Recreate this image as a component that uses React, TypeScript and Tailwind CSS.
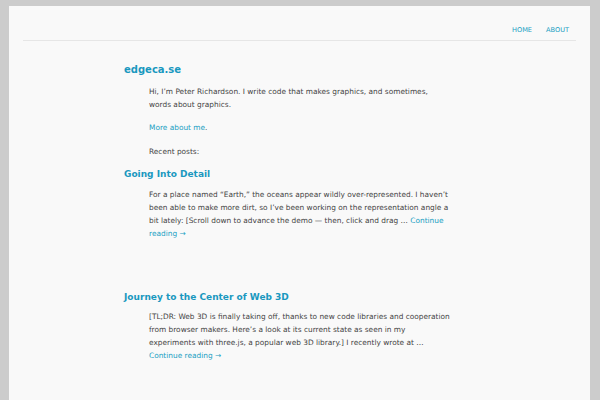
import React from "react";

export default function App() {
  const font = { fontFamily: '"DejaVu Sans", Verdana, sans-serif' };
  return (
    <div className="min-h-[400px] bg-[#cccccc] pl-[9px] pr-[10px] pt-[6px]" style={font}>
      <div className="min-h-[394px] bg-[#f9f9f9] px-[14px]">
        <div className="flex justify-end gap-[14px] border-b border-[#e6e6e6] pr-[7px] pt-[19px] pb-[5px] text-[6.6px] leading-[10px] text-[#21a0c3]">
          <a>HOME</a>
          <a>ABOUT</a>
        </div>
        <div className="ml-[101px] w-[340px] pt-[21px] text-[7.4px] leading-[13px] text-[#444]">
          <h1 className="text-[10px] font-bold leading-[16px] text-[#1a98bf]">edgeca.se</h1>
          <div className="pl-[25px] pt-[7px]">
            <p className="whitespace-nowrap">Hi, I’m Peter Richardson. I write code that makes graphics, and sometimes,<br />words about graphics.</p>
            <p className="mt-[10px]"><a className="text-[#21a0c3]">More about me</a>.</p>
            <p className="mt-[11px]">Recent posts:</p>
          </div>
          <h2 className="mt-[8px] text-[9px] font-bold leading-[16px] text-[#1a98bf]">Going Into Detail</h2>
          <p className="mt-[6px] whitespace-nowrap pl-[25px]">
            For a place named “Earth,” the oceans appear wildly over-represented. I haven’t<br />
            been able to make more dirt, so I’ve been working on the representation angle a<br />
            bit lately: [Scroll down to advance the demo — then, click and drag … <a className="text-[#21a0c3]">Continue<br />reading →</a>
          </p>
          <h2 className="mt-[49px] text-[9px] font-bold leading-[16px] text-[#1a98bf]">Journey to the Center of Web 3D</h2>
          <p className="mt-[5px] whitespace-nowrap pl-[25px]">
            [TL;DR: Web 3D is finally taking off, thanks to new code libraries and cooperation<br />
            from browser makers. Here’s a look at its current state as seen in my<br />
            experiments with three.js, a popular web 3D library.] I recently wrote at …<br />
            <a className="text-[#21a0c3]">Continue reading →</a>
          </p>
        </div>
      </div>
    </div>
  );
}
